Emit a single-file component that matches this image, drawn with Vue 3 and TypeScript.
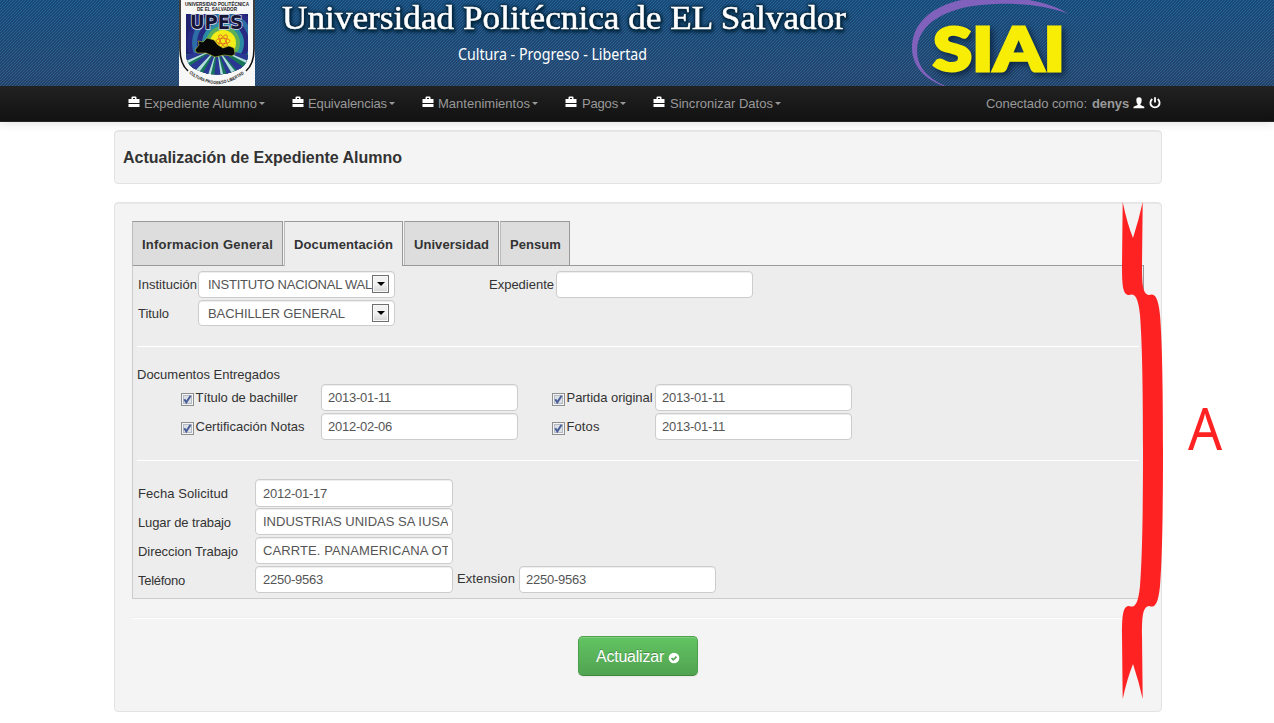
<script setup lang="ts">
import { ref, type Directive } from 'vue'

interface MenuItem {
  label: string
  width: number
  slot: number
  gap: number
}

const menu: MenuItem[] = [
  { label: 'Expediente Alumno', width: 113, slot: 164, gap: 4 },
  { label: 'Equivalencias', width: 79, slot: 130, gap: 4 },
  { label: 'Mantenimientos', width: 92, slot: 143, gap: 4 },
  { label: 'Pagos', width: 36, slot: 88, gap: 5 },
  { label: 'Sincronizar Datos', width: 103, slot: 140, gap: 5 },
]

const tabs = [
  { label: 'Informacion General', width: 151, text: 131 },
  { label: 'Documentación', width: 119, text: 99 },
  { label: 'Universidad', width: 95, text: 75 },
  { label: 'Pensum', width: 70, text: 51 },
]
const activeTab = ref(1)

const documents = ref([
  { label: 'Título de bachiller', width: 102, date: '2013-01-11', checked: true },
  { label: 'Partida original', width: 86, date: '2013-01-11', checked: true },
  { label: 'Certificación Notas', width: 109, date: '2012-02-06', checked: true },
  { label: 'Fotos', width: 33, date: '2013-01-11', checked: true },
])

const work = ref([
  { label: 'Fecha Solicitud', width: 90, value: '2012-01-17' },
  { label: 'Lugar de trabajo', width: 93, value: 'INDUSTRIAS UNIDAS SA IUSA' },
  { label: 'Direccion Trabajo', width: 100, value: 'CARRTE. PANAMERICANA OT' },
  { label: 'Teléfono', width: 47, value: '2250-9563' },
])
const extension = ref('2250-9563')
const record = ref('')

// Spreads the letters of a one-line label so that it takes the given width.
const vFit: Directive<HTMLElement, number> = {
  mounted(el, { value }) {
    const count = (el.textContent ?? '').length
    const natural = el.getBoundingClientRect().width
    if (count > 1) el.style.letterSpacing = `${(value - natural) / count}px`
  },
}
</script>

<template>
  <div class="page">
    <header class="banner">
      <svg class="crest" width="76" height="86" viewBox="0 0 76 86">
        <defs>
          <clipPath id="shield"><path d="M7 14H69V56Q68 66 58 70Q38 79 18 70Q8 66 7 56Z" /></clipPath>
        </defs>
        <rect width="76" height="86" fill="#f7f7f7" />
        <path d="M1 0V49Q1 64 9 71M75 0V49Q75 64 67 71" fill="none" stroke="#111" stroke-width="1.6" />
        <text x="38" y="5.5" class="crest-name" textLength="64" lengthAdjust="spacingAndGlyphs">UNIVERSIDAD POLITÉCNICA</text>
        <text x="38" y="10.500" class="crest-name" textLength="40" lengthAdjust="spacingAndGlyphs">DE EL SALVADOR</text>
        <g clip-path="url(#shield)">
          <rect x="7" y="14" width="62" height="64" fill="#20226f" />
          <circle cx="44" cy="43" r="36" fill="#262a83" />
          <circle cx="44" cy="43" r="31" fill="#2c6da5" />
          <circle cx="44" cy="43" r="26" fill="#262a83" />
          <circle cx="44" cy="43" r="21" fill="#2a8ca4" />
          <circle cx="44" cy="43" r="17" fill="#5cae58" />
          <circle cx="44" cy="43" r="13" fill="#f2ed19" />
          <path d="M7 54H69V78H7Z" fill="#167558" />
          <path d="M38 48L7 55V61ZM38 48L7 68L14 73ZM38 48L21 78H28ZM38 48L35 78H42ZM38 48L49 78H55ZM38 48L62 75L67 69ZM38 48L69 61V55Z" fill="#2c3694" />
          <path d="M38 48L7 61V64ZM38 48L14 73L18 75ZM38 48L28 78H31ZM38 48L42 78H45ZM38 48L55 77L59 75ZM38 48L69 64V61Z" fill="#b5dde0" />
          <g fill="none" stroke="#df641e" stroke-width=".8">
            <ellipse cx="44" cy="41" rx="7" ry="2.7" />
            <ellipse cx="44" cy="41" rx="7" ry="2.7" transform="rotate(60 44 41)" />
            <ellipse cx="44" cy="41" rx="7" ry="2.7" transform="rotate(120 44 41)" />
          </g>
          <path d="M16 50L20 45L19 41L24 42L28 38L35 40L39 45L44 48L50 46L55 48L56 54L53 56L45 55L36 57L27 53L18 53Z" fill="#080808" stroke="#d0db28" stroke-width=".5" />
        </g>
        <text x="37.5" y="29" class="crest-mark" textLength="53" lengthAdjust="spacingAndGlyphs">UPES</text>
        <path id="motto" d="M10 73Q20 82 38 84.500Q56 82 67 72" fill="none" />
        <text class="crest-name motto"><textPath href="#motto" textLength="60" lengthAdjust="spacingAndGlyphs">CULTURA PROGRESO LIBERTAD</textPath></text>
      </svg>
      <svg class="names" width="600" height="86" viewBox="0 0 600 86">
        <text x="15" y="29" class="university" textLength="564" lengthAdjust="spacingAndGlyphs">Universidad Politécnica de EL Salvador</text>
        <text x="191" y="60" class="slogan" textLength="189" lengthAdjust="spacingAndGlyphs">Cultura - Progreso - Libertad</text>
      </svg>
      <svg class="brand" width="180" height="86" viewBox="0 0 180 86">
        <path d="M43 86C20 77 12 62 12 48C12 17 43 -3 92 -3C125 -3 151 3 169 14C147 6 122 3 96 4C48 5 17 23 17 51C17 66 27 78 45 86Z" fill="#8062bd" />
        <text x="33" y="71" class="siai" textLength="132" lengthAdjust="spacingAndGlyphs">SIAI</text>
      </svg>
    </header>

    <nav class="navbar">
      <a v-for="item in menu" :key="item.label" class="menu" :style="{ width: item.slot + 'px' }">
        <svg class="case" width="12" height="12" viewBox="0 0 12 12">
          <path d="M.5 3H3.500V1.600Q3.500 .6 4.500 .6H7.500Q8.500 .6 8.500 1.600V3H11.500V7H.5ZM5 3H7V2H5ZM.5 8H11.500V11H.5Z" fill="#fff" fill-rule="evenodd" />
        </svg>
        <span v-fit="item.width" :style="{ marginLeft: item.gap + 'px' }">{{ item.label }}</span>
        <i class="caret"></i>
      </a>
      <div class="session">
        <span v-fit="101">Conectado como:</span>
        <b v-fit="37">denys</b>
        <svg class="user" width="12" height="12" viewBox="0 0 12 12">
          <path d="M3.300 3.300Q3.200.3 6 .3T8.700 3.300Q8.600 6 7.400 7V8L11.300 9.700V11.300H.5V9.700L4.600 8V7Q3.400 6 3.300 3.300Z" fill="#fff" />
        </svg>
        <svg class="power" width="12" height="12" viewBox="0 0 12 12">
          <path d="M3.300 2.100A4.600 4.600 0 1 0 8.700 2.100M6 .2V5.600" fill="none" stroke="#fff" stroke-width="1.8" />
        </svg>
      </div>
    </nav>

    <main class="container">
      <section class="well title">
        <h1><span v-fit="279">Actualización de Expediente Alumno</span></h1>
      </section>

      <section class="well form">
        <div class="tabs">
          <button
            v-for="(tab, i) in tabs"
            :key="tab.label"
            class="tab"
            :class="{ active: i === activeTab }"
            :style="{ width: tab.width + 'px' }"
            @click="activeTab = i"
          ><span v-fit="tab.text">{{ tab.label }}</span></button>
        </div>

        <div class="panel">
          <div class="school">
            <label><span v-fit="59">Institución</span></label>
            <div class="field select"><span class="value"><span v-fit="164">INSTITUTO NACIONAL WAL</span></span><i class="drop"></i></div>
            <label class="record"><span v-fit="65">Expediente</span></label>
            <input v-model="record" class="field" />
            <label><span v-fit="31">Titulo</span></label>
            <div class="field select short"><span class="value"><span v-fit="137">BACHILLER GENERAL</span></span><i class="drop"></i></div>
          </div>
          <hr />
          <p class="legend"><span v-fit="143">Documentos Entregados</span></p>
          <div class="documents">
            <template v-for="doc in documents" :key="doc.label">
              <label class="check">
                <svg width="13" height="13" viewBox="0 0 13 13" @click="doc.checked = !doc.checked">
                  <rect x=".5" y=".5" width="12" height="12" fill="#f4f4f4" stroke="#8e8f8f" />
                  <rect x="2.5" y="2.5" width="8" height="8" fill="#dde0e5" stroke="#b5bbc4" />
                  <path v-if="doc.checked" d="M3.3 6.2L5.3 9.4L9.6 2.8" fill="none" stroke="#4a5f97" stroke-width="2" />
                </svg>
                <span v-fit="doc.width">{{ doc.label }}</span>
              </label>
              <input v-model="doc.date" class="field" />
            </template>
          </div>
          <hr class="second" />
          <div class="work">
            <template v-for="(row, i) in work" :key="row.label">
              <label><span v-fit="row.width">{{ row.label }}</span></label>
              <div class="entry">
                <input v-model="row.value" class="field wide" :class="{ tall: i === 0, place: i === 1, address: i === 2 }" />
                <template v-if="i === 3">
                  <label class="ext"><span v-fit="58">Extension</span></label>
                  <input v-model="extension" class="field" />
                </template>
              </div>
            </template>
          </div>
        </div>

        <hr class="divider" />
        <button class="submit">
          <span v-fit="68">Actualizar</span>
          <svg width="12" height="12" viewBox="0 0 12 12">
            <circle cx="6" cy="6" r="5.3" fill="#fff" />
            <path d="M3.5 6L5.3 7.8L8.5 4.6" fill="none" stroke="#52a452" stroke-width="1.7" />
          </svg>
        </button>
      </section>
    </main>

    <svg class="marker" width="110" height="500" viewBox="0 0 110 500">
      <path d="M2.7 1Q7 22 13 37Q19 18 22.7 1L22 64C22 85 23 93 29 94C34 92 38 94 40 114C42 140 43 180 43 249.500C43 319 42 359 40 385C38 405 34 407 29 405C23 406 22 414 22 435L22.7 498Q19 481 13 463Q7 478 2.700 498L2 435C2 414 3 405 9 405C14 407 18 405 20 385C22 359 23 319 23 249.500C23 180 22 140 20 114C18 94 14 92 9 94C3 94 2 85 2 64Z" fill="#f22" />
      <text x="0" y="0" transform="translate(68 249) scale(.93 1)">A</text>
    </svg>
  </div>
</template>

<style>
body {
  margin: 0;
  background: #fff;
}
</style>

<style scoped>
.page {
  position: relative;
  width: 1274px;
  height: 723px;
  overflow: hidden;
  background: #fff;
  color: #333;
  font: 13px/18px "Liberation Sans", Arial, sans-serif;
  white-space: nowrap;
}
.banner {
  display: flex;
  height: 86px;
  padding-left: 179px;
  background:
    repeating-linear-gradient(135deg, rgba(20, 25, 65, .3) 0 1px, rgba(80, 140, 175, .16) 1px 2.121px),
    linear-gradient(#1a5d90, #2c5680);
}
.names {
  margin-left: 12px;
}
.brand {
  margin-left: 33px;
}
.crest-name {
  font: bold 5px "Liberation Sans", Arial, sans-serif;
  fill: #222;
  text-anchor: middle;
}
.crest-name.motto {
  font-size: 4.5px;
  text-anchor: start;
}
.crest-mark {
  font: bold 20px "DejaVu Sans", sans-serif;
  fill: #171536;
  stroke: #d8dde9;
  stroke-width: 1.6px;
  paint-order: stroke;
  text-anchor: middle;
}
.university {
  font: 33px "Liberation Serif", "Times New Roman", serif;
  fill: #fff;
  stroke: #fff;
  stroke-width: .5px;
  filter: drop-shadow(0 0 1.5px #03263f) drop-shadow(0 0 1.5px #03263f) drop-shadow(1px 2px 1px #062c45);
}
.slogan {
  font: 15.5px "Noto Sans", sans-serif;
  fill: #fff;
}
.siai {
  font: 900 61px Lato, sans-serif;
  fill: #f7ed05;
  stroke: #f7ed05;
  stroke-width: 3px;
  filter: drop-shadow(3px 3px 3px rgba(5, 25, 50, .75));
}
.navbar {
  display: flex;
  box-sizing: border-box;
  height: 36px;
  padding: 0 113px 0 128px;
  border-bottom: 1px solid #252525;
  background: linear-gradient(#222, #111);
  box-shadow: 0 1px 10px rgba(0, 0, 0, .12);
  color: #999;
  line-height: 36px;
}
.menu {
  display: flex;
  flex: none;
}
.case {
  margin-top: 10px;
}
.caret {
  width: 0;
  height: 0;
  margin: 16px 0 0 2px;
  border: 3px solid transparent;
  border-top-color: #999;
  border-bottom: 0;
}
.session {
  display: flex;
  margin-left: auto;
}
.session b {
  margin-left: 5px;
}
.user {
  margin: 11px 0 0 4px;
}
.power {
  margin: 11px 0 0 4px;
}
.container {
  width: 1048px;
  margin: 8px 0 0 114px;
}
.well {
  box-sizing: border-box;
  border: 1px solid #e3e3e3;
  border-radius: 4px;
  background: #f4f4f4;
  box-shadow: inset 0 1px 1px rgba(0, 0, 0, .05);
}
.title {
  height: 54px;
  padding: 17px 8px;
}
h1 {
  margin: 0;
  font-size: 16px;
  line-height: 20px;
}
.form {
  height: 510px;
  margin-top: 18px;
  padding: 18px 17px 0;
}
.tabs {
  display: flex;
  gap: 1px;
  height: 44px;
}
.tab {
  box-sizing: border-box;
  height: 44px;
  padding: 1px 0 0 9px;
  border: 1px solid #999;
  border-bottom: 0;
  border-left-color: #bbb;
  background: #ddd;
  color: #333;
  font: bold 13px "Liberation Sans", Arial, sans-serif;
  text-align: left;
}
.tab.active {
  z-index: 1;
  height: 45px;
  padding-bottom: 1px;
  background: #ededed;
}
.panel {
  box-sizing: border-box;
  width: 1012px;
  height: 334px;
  padding: 5px 4px 0;
  border: 1px solid #ccc;
  border-top-color: #999;
  border-right-color: #999;
  background: #ededed;
}
.school {
  display: grid;
  grid-template-columns: 61px 291px 67px 197px;
  grid-auto-rows: 29px;
}
.school label {
  padding: 5px 0 0 1px;
}
.record {
  margin-left: -1px;
}
.field {
  box-sizing: border-box;
  width: 197px;
  height: 27px;
  margin: 0;
  padding: 0 6px;
  border: 1px solid #ccc;
  border-radius: 4px;
  outline: 0;
  background: #fff;
  box-shadow: inset 0 1px 1px rgba(0, 0, 0, .075);
  color: #555;
  font: 13px "Liberation Sans", Arial, sans-serif;
  letter-spacing: -.25px;
}
.select {
  display: flex;
  align-items: center;
  padding: 0 5px 1px 9px;
}
.short {
  height: 26px;
  padding-bottom: 0;
}
.value {
  flex: 1;
  letter-spacing: 0;
}
.drop {
  display: flex;
  box-sizing: border-box;
  flex: none;
  align-items: center;
  justify-content: center;
  width: 17px;
  height: 18px;
  border: 1px solid #707070;
  background: linear-gradient(#f2f2f2 50%, #d5d5d5);
  box-shadow: inset 0 0 0 1px #f8f8f8;
}
.drop::before {
  border: 4px solid transparent;
  border-top-color: #000;
  border-bottom: 0;
  content: "";
}
hr {
  height: 1px;
  margin: 17px 0 0;
  border: 0;
  background: #fff;
}
.legend {
  margin: 19px 0 0;
}
.documents {
  display: grid;
  grid-template-columns: 140px 231px 103px 197px;
  grid-auto-rows: 29px;
  margin: 0 0 0 44px;
}
.check {
  display: flex;
  padding-top: 5px;
}
.check svg {
  margin: 4px 1.5px 0 0;
}
.second {
  margin-top: 18px;
}
.work {
  display: grid;
  grid-template-columns: 118px 600px;
  grid-auto-rows: 29px;
  margin-top: 18px;
}
.work label {
  padding: 6px 0 0 1px;
}
.entry {
  display: flex;
}
.wide {
  width: 198px;
  padding-left: 7px;
}
.tall {
  height: 28px;
}
.place {
  padding-right: 4px;
  letter-spacing: 0;
}
.address {
  padding-right: 4px;
  letter-spacing: .1px;
}
.work .ext {
  width: 62px;
  box-sizing: border-box;
  margin-right: 4px;
  padding: 4px 0 0 4px;
}
.divider {
  width: 1012px;
  height: 2px;
  margin-top: 18px;
  background: linear-gradient(#eee 50%, #fff 50%);
}
.submit {
  display: flex;
  box-sizing: border-box;
  width: 120px;
  height: 40px;
  margin: 17px 0 0 446px;
  padding: 0 17px;
  border: 1px solid #4c9f4c;
  border-bottom-color: #3d873d;
  border-radius: 5px;
  background: linear-gradient(#62c462, #51a351);
  box-shadow: inset 0 1px 0 rgba(255, 255, 255, .2), 0 1px 2px rgba(0, 0, 0, .05);
  color: #fff;
  font: 16px/39px "Liberation Sans", Arial, sans-serif;
  text-shadow: 0 -1px 0 rgba(0, 0, 0, .25);
}
.submit svg {
  flex: none;
  margin: 15px 0 0 4px;
}
.marker {
  position: absolute;
  top: 201px;
  left: 1120px;
  pointer-events: none;
}
.marker text {
  font: 57.5px "Noto Sans", sans-serif;
  fill: #f22;
}
</style>
